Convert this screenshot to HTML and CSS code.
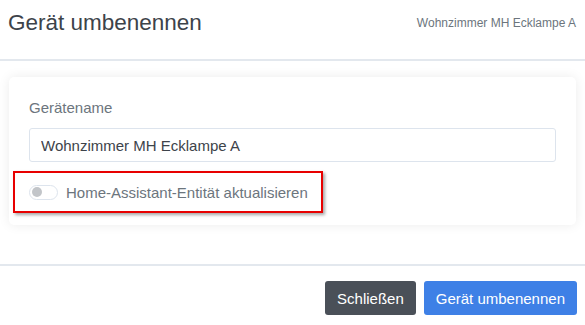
FILE: index.html
```html
<!DOCTYPE html>
<html lang="de">
<head>
    <meta charset="UTF-8">
    <title>Gerät umbenennen</title>
    <link rel="stylesheet" href="styles.css">
</head>
<body>
    <div class="modal">
        <header class="modal-header">
            <h1>Gerät umbenennen</h1>
            <span class="subtitle">Wohnzimmer MH Ecklampe A</span>
        </header>

        <div class="modal-body">
            <div class="card">
                <label class="field-label" for="device-name">Gerätename</label>
                <input class="field-input" id="device-name" type="text" value="Wohnzimmer MH Ecklampe A">

                <!-- highlighted option -->
                <div class="highlight">
                    <span class="toggle"><span class="knob"></span></span>
                    <span class="toggle-label">Home-Assistant-Entität aktualisieren</span>
                </div>
            </div>
        </div>

        <footer class="modal-footer">
            <button class="btn btn-dark">Schließen</button>
            <button class="btn btn-primary">Gerät umbenennen</button>
        </footer>
    </div>
</body>
</html>
```

FILE: styles.css
```css
body {
    margin: 0;
    font-family: "Liberation Sans", Arial, sans-serif;
    background: #fff;
    color: #343a40;
}
.modal {
    width: 585px;
}
.modal-header {
    display: flex;
    justify-content: space-between;
    align-items: center;
    height: 42px;
    padding: 2px 9px 15px 8px;
    border-bottom: 2px solid #e3e8ee;
}
.modal-header h1 {
    margin: 0;
    font-size: 22.5px;
    font-weight: normal;
    color: #3d434a;
}
.subtitle {
    font-size: 12px;
    color: #6c757d;
}
.modal-body {
    padding: 16px 9px 39px 9px;
}
.card {
    background: #fff;
    border-radius: 5px;
    box-shadow: 0 0 12px rgba(0, 0, 0, 0.08);
    padding: 22px 20px 12px 20px;
    display: flex;
    flex-direction: column;
}
.field-label {
    font-size: 15px;
    color: #6c757d;
    margin-bottom: 12px;
}
.field-input {
    height: 34px;
    box-sizing: border-box;
    border: 1px solid #dde4ed;
    border-radius: 3px;
    padding: 0 11px;
    font-family: inherit;
    font-size: 15px;
    color: #3d434a;
}
.highlight {
    display: flex;
    align-items: center;
    gap: 8px;
    width: 292px;
    height: 38px;
    margin: 9px 0 0 -16px;
    padding-left: 14px;
    border: 2px solid #e80000;
    box-shadow: 2px 2px 3px rgba(0, 0, 0, 0.35);
}
.toggle {
    display: flex;
    align-items: center;
    box-sizing: border-box;
    width: 29px;
    height: 15px;
    border: 1px solid #dde4ed;
    border-radius: 8px;
    padding: 0 2px;
}
.knob {
    width: 10px;
    height: 10px;
    border-radius: 50%;
    background: #c2c5c9;
}
.toggle-label {
    font-size: 15px;
    color: #6c757d;
}
.modal-footer {
    display: flex;
    justify-content: flex-end;
    gap: 8px;
    padding: 15px 8px 0 8px;
    border-top: 2px solid #e3e8ee;
}
.btn {
    height: 34px;
    padding: 0 12px;
    border: none;
    border-radius: 3px;
    font-family: inherit;
    font-size: 15px;
    color: #fff;
}
.btn-dark {
    background: #4a5058;
}
.btn-primary {
    background: #3e80e6;
}
```
